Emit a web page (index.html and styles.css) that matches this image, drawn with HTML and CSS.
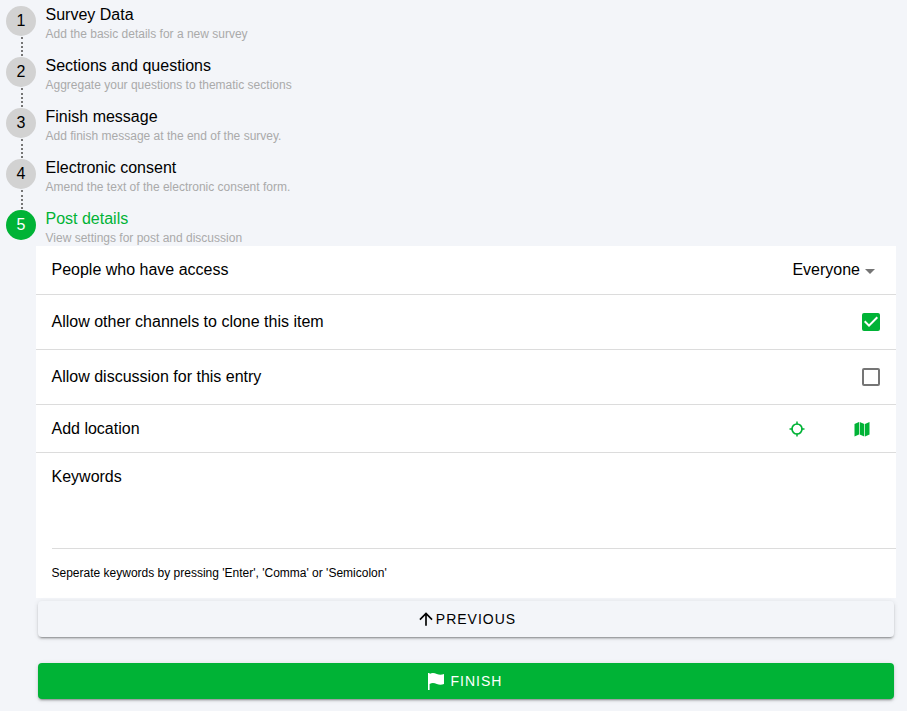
FILE: index.html
```html
<!DOCTYPE html>
<html lang="en">
<head>
<meta charset="utf-8">
<title>Post details</title>
<link rel="stylesheet" href="styles.css">
</head>
<body>
<ol class="steps">
  <li class="step">
    <div class="rail"><span class="num">1</span><span class="line"></span></div>
    <div class="label"><div class="title">Survey Data</div><div class="sub">Add the basic details for a new survey</div></div>
  </li>
  <li class="step">
    <div class="rail"><span class="num">2</span><span class="line"></span></div>
    <div class="label"><div class="title">Sections and questions</div><div class="sub">Aggregate your questions to thematic sections</div></div>
  </li>
  <li class="step">
    <div class="rail"><span class="num">3</span><span class="line"></span></div>
    <div class="label"><div class="title">Finish message</div><div class="sub">Add finish message at the end of the survey.</div></div>
  </li>
  <li class="step">
    <div class="rail"><span class="num">4</span><span class="line"></span></div>
    <div class="label"><div class="title">Electronic consent</div><div class="sub">Amend the text of the electronic consent form.</div></div>
  </li>
  <li class="step step-active">
    <div class="rail"><span class="num">5</span></div>
    <div class="label"><div class="title">Post details</div><div class="sub">View settings for post and discussion</div></div>
  </li>
</ol>
<section class="panel">
  <div class="row row-access">
    <span>People who have access</span>
    <span class="select">Everyone<span class="caret"></span></span>
  </div>
  <div class="row row-check">
    <span>Allow other channels to clone this item</span>
    <svg class="box" width="24" height="24" viewBox="0 0 24 24"><path fill="#00b336" d="M19 3H5a2 2 0 0 0-2 2v14a2 2 0 0 0 2 2h14a2 2 0 0 0 2-2V5a2 2 0 0 0-2-2zm-9 14-5-5 1.41-1.41L10 14.17l7.59-7.59L19 8l-9 9z"/></svg>
  </div>
  <div class="row row-check">
    <span>Allow discussion for this entry</span>
    <svg class="box" width="24" height="24" viewBox="0 0 24 24"><path fill="#757575" d="M19 5v14H5V5h14m0-2H5a2 2 0 0 0-2 2v14a2 2 0 0 0 2 2h14a2 2 0 0 0 2-2V5a2 2 0 0 0-2-2z"/></svg>
  </div>
  <div class="row row-location">
    <span>Add location</span>
    <span class="loc-icons">
      <svg width="16" height="16" viewBox="0 0 16 16"><circle cx="8" cy="8" r="5" fill="none" stroke="#00b336" stroke-width="1.7"/><path stroke="#00b336" stroke-width="1.5" d="M8 .5v3M8 12.500v3M.5 8h3M12.500 8h3"/></svg>
      <svg width="16" height="16" viewBox="0 0 16 16"><path fill="#00b336" d="M.5 3 5 1v12.500L.5 15.500zM5.700 1l4.600 2v12.500l-4.600-2zM11 3l4.500-2v12.500L11 15.500z"/></svg>
    </span>
  </div>
  <div class="keywords">Keywords</div>
  <div class="hint">Seperate keywords by pressing 'Enter', 'Comma' or 'Semicolon'</div>
</section>
<div class="actions">
  <button class="btn btn-prev" type="button">
    <svg width="20" height="20" viewBox="0 0 24 24"><path fill="#000" d="M4 12l1.410 1.410L11 7.830V20h2V7.830l5.580 5.590L20 12l-8-8-8 8z"/></svg>
    PREVIOUS
  </button>
  <button class="btn btn-finish" type="button">
    <svg width="18" height="18" viewBox="0 0 18 18"><path fill="#fff" d="M1 1h1.600v17H1zM2.600 2c2.400-1.400 4.800-1 7.200 0s4.800 1 7.200 0v10c-2.400 1-4.800 1-7.200 0s-4.800-1.400-7.200 0z"/></svg>
    FINISH
  </button>
</div>
</body>
</html>
```
FILE: styles.css
```css
* { box-sizing: border-box; }
html, body { margin: 0; padding: 0; }
body {
  width: 907px;
  height: 711px;
  overflow: hidden;
  background: #f3f5f9;
  font-family: "Liberation Sans", Arial, sans-serif;
  color: #000;
}
.steps { list-style: none; margin: 0; padding: 6px 0 0 6px; }
.step { display: flex; height: 51px; gap: 9.5px; }
.step-active { height: 36px; }
.rail { width: 30px; display: flex; flex-direction: column; align-items: center; }
.num {
  width: 30px; height: 30px; flex: none; border-radius: 50%;
  background: #d2d2d2; color: #000;
  font-size: 16px; line-height: 30px; text-align: center;
}
.line { flex: 1; margin: 1px 0 1px 2px; width: 0; border-left: 2px dotted #757575; }
.label { margin-top: 0; }
.title { font-size: 16px; line-height: 18px; }
.sub { font-size: 12px; line-height: 14px; margin-top: 3px; color: #aaaaaa; }
.step-active .num { background: #00b336; color: #fff; }
.step-active .title { color: #00b336; }
.panel { margin: 0 11px 0 36px; height: 352px; background: #fff; font-size: 16px; }
.row {
  display: flex; align-items: center; justify-content: space-between;
  margin: 0; padding: 0 15px 0 15.5px;
  border-bottom: 1px solid #dcdcdc;
}
.row-access { height: 49px; }
.row-check { height: 55px; }
.row-location { height: 48px; }
.select { display: flex; align-items: center; padding-right: 6px; }
.caret {
  width: 0; height: 0; margin-left: 5px; margin-top: 2px;
  border-left: 5.5px solid transparent; border-right: 5.5px solid transparent;
  border-top: 5.5px solid #757575;
}
.box { margin-right: -2px; }
.loc-icons { display: flex; align-items: center; gap: 49.5px; padding-right: 11px; }
.keywords {
  height: 96px; margin-left: 15.5px; padding-top: 15px;
  line-height: 18px; border-bottom: 1px solid #dcdcdc;
}
.hint { padding: 17px 0 0 15.5px; font-size: 12px; line-height: 14px; }
.actions { display: flex; flex-direction: column; gap: 26px; padding: 3px 13px 0 38px; }
.btn {
  display: flex; align-items: center; justify-content: center;
  width: 856px; border: 0; border-radius: 4px; padding: 0;
  font-family: "Liberation Sans", Arial, sans-serif;
  font-size: 14px; font-weight: 400; letter-spacing: 1px;
  box-shadow: 0 3px 1px -2px rgba(0,0,0,.2), 0 2px 2px 0 rgba(0,0,0,.14), 0 1px 5px 0 rgba(0,0,0,.12);
}
.btn-prev { height: 36px; background: #f3f5f9; color: #000; }
.btn-finish { height: 36px; background: #00b336; color: #fff; gap: 6px; padding-right: 3px; }
```
